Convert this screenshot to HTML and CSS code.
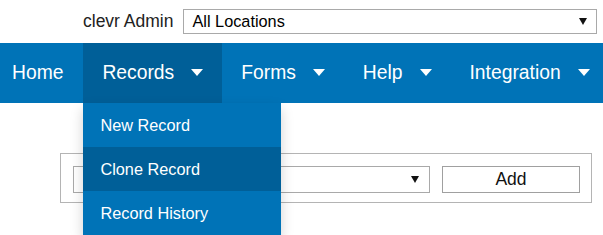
FILE: index.html
```html
<!DOCTYPE html>
<html>
<head>
<meta charset="utf-8">
<link rel="stylesheet" href="styles.css">
</head>
<body>
<div class="topbar">
  <span class="user">clevr Admin</span>
  <div class="fake-select loc-select"><span>All Locations</span><i class="caret"></i></div>
</div>
<nav class="nav">
  <ul class="menu">
    <li class="item home"><span>Home</span></li>
    <li class="item open"><span>Records</span><i class="tri"></i>
      <ul class="dropdown">
        <li class="dd-item">New Record</li>
        <li class="dd-item active">Clone Record</li>
        <li class="dd-item">Record History</li>
      </ul>
    </li>
    <li class="item"><span>Forms</span><i class="tri"></i></li>
    <li class="item"><span>Help</span><i class="tri"></i></li>
    <li class="item"><span>Integration</span><i class="tri"></i></li>
  </ul>
</nav>
<main class="content">
  <div class="panel">
    <div class="fake-select form-select"><span></span><i class="caret"></i></div>
    <div class="btn">Add</div>
  </div>
</main>
</body>
</html>
```
FILE: styles.css
```css
* { box-sizing: border-box; }
html, body { margin: 0; padding: 0; }
body {
  font-family: "Liberation Sans", Arial, sans-serif;
  color: #000;
  background: #fff;
  width: 603px;
  height: 235px;
  overflow: hidden;
}
.topbar {
  height: 43px;
  display: flex;
  align-items: center;
  padding-left: 83px;
}
.user {
  font-size: 17.5px;
  color: #222;
  margin-right: 10px;
}
.fake-select {
  display: flex;
  align-items: center;
  justify-content: space-between;
  border: 1px solid #a9a9a9;
  background: #fff;
  font-size: 16.3px;
}
.loc-select {
  width: 414px;
  height: 25px;
  padding: 0 9px 0 8px;
}
.caret {
  width: 0;
  height: 0;
  border-left: 4px solid transparent;
  border-right: 4px solid transparent;
  border-top: 7px solid #111;
}
.nav {
  height: 60px;
  background: #0073b7;
}
.menu {
  list-style: none;
  margin: 0;
  padding: 0;
  display: flex;
  height: 60px;
  white-space: nowrap;
}
.item {
  position: relative;
  display: flex;
  align-items: center;
  gap: 17px;
  height: 60px;
  padding: 0 19px;
  color: #fff;
  font-size: 19.3px;
}
.item.home { padding: 0 20px 0 12px; }
.item.open { background: #005f98; }
.tri {
  width: 0;
  height: 0;
  border-left: 6.5px solid transparent;
  border-right: 6.5px solid transparent;
  border-top: 7px solid #fff;
  margin-bottom: 2px;
}
.dropdown {
  position: absolute;
  left: 0;
  top: 60px;
  width: 198px;
  margin: 0;
  padding: 0;
  list-style: none;
  background: #0073b7;
  box-shadow: 0 6px 12px rgba(0, 0, 0, 0.18);
  z-index: 5;
}
.dd-item {
  height: 44px;
  line-height: 44px;
  padding-left: 17px;
  font-size: 16.3px;
  color: #fff;
}
.dd-item.active { background: #005f98; }
.content {
  padding: 50px 11px 0 60px;
}
.panel {
  width: 532px;
  height: 50px;
  border: 1px solid #b4b4b4;
  display: flex;
  align-items: flex-start;
  gap: 12px;
  padding: 12px 11px 0 12px;
}
.form-select {
  width: 357px;
  height: 27px;
  padding: 0 10px 0 8px;
}
.btn {
  width: 138px;
  height: 27px;
  border: 1px solid #a0a0a0;
  background: #fff;
  display: flex;
  align-items: center;
  justify-content: center;
  font-size: 17.5px;
  color: #111;
}
```
